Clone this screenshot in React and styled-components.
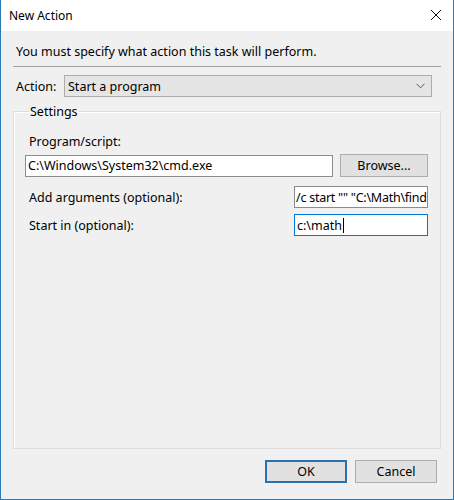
import styled, { createGlobalStyle } from "styled-components";

const Global = createGlobalStyle`
  html, body { margin: 0; padding: 0; background: #ffffff; }
  body { font-family: "Noto Sans", "Open Sans", sans-serif; font-size: 12.5px; color: #000; }
  * { box-sizing: border-box; }
`;

const Window = styled.div`
  width: 454px;
  height: 500px;
  display: flex;
  flex-direction: column;
  border: 1px solid #2b79b5;
  border-top: none;
  background: #f0f0f0;
`;

const TitleBar = styled.div`
  height: 31px;
  background: #ffffff;
  display: flex;
  align-items: center;
  justify-content: space-between;
  padding: 0 11px 1px 8px;
  font-size: 12px;
`;

const CloseBtn = styled.span`
  display: flex;
  width: 12px;
  height: 12px;
`;

const Body = styled.div`
  flex: 1;
  display: flex;
  flex-direction: column;
  padding: 0 12px;
`;

const Intro = styled.div`
  padding: 13px 0 0 3px;
  line-height: 15px;
  height: 36px;
  border-bottom: 1px solid #a0a0a0;
`;

const Row = styled.div`
  display: flex;
  align-items: center;
  gap: ${(p) => p.$gap || 0}px;
  margin-top: ${(p) => p.$top || 0}px;
  margin-right: ${(p) => p.$right || 0}px;
`;

const Label = styled.div`
  width: ${(p) => (p.$width ? `${p.$width}px` : "auto")};
  flex: ${(p) => (p.$grow ? 1 : "none")};
  padding-left: ${(p) => p.$pad || 3}px;
  line-height: 15px;
  white-space: nowrap;
`;

const Combo = styled.div`
  flex: 1;
  height: 22px;
  display: flex;
  align-items: center;
  justify-content: space-between;
  padding: 0 6px 0 3px;
  background: #e5e5e5;
  border: 1px solid #acacac;
`;

const Group = styled.fieldset`
  flex: 1;
  margin: 7px 0 0;
  min-width: 0;
  padding: 0 12px 0 11px;
  border: 1px solid #dcdcdc;
  box-shadow: inset 1px 1px 0 #ffffff;

  legend {
    margin-left: 4px;
    padding: 0 1px;
    line-height: 15px;
  }
`;

const TextBox = styled.div`
  width: ${(p) => (p.$width ? `${p.$width}px` : "auto")};
  flex: ${(p) => (p.$width ? "none" : 1)};
  height: 22px;
  display: flex;
  align-items: center;
  padding: 0 ${(p) => (p.$tight ? 1 : 2)}px;
  letter-spacing: ${(p) => (p.$tight ? "-0.25px" : "normal")};
  background: #ffffff;
  border: 1px solid ${(p) => (p.$focused ? "#0078d7" : "#8c8c8c")};
  white-space: nowrap;
  overflow: hidden;
`;

const Caret = styled.span`
  display: inline-block;
  width: 1px;
  height: 15px;
  background: #000;
  margin-left: 1px;
`;

const Button = styled.div`
  width: ${(p) => p.$width || 82}px;
  height: 23px;
  display: flex;
  align-items: center;
  justify-content: center;
  background: #e1e1e1;
  border: ${(p) => (p.$default ? "2px solid #2a72ad" : "1px solid #adadad")};
`;

const Footer = styled.div`
  display: flex;
  justify-content: flex-end;
  gap: 8px;
  padding: 11px 4px 16px 0;
`;

function Chevron() {
  return (
    <svg width="9" height="6" viewBox="0 0 9 6">
      <path d="M0.5 0.8 L4.5 4.8 L8.5 0.8" fill="none" stroke="#555" strokeWidth="1" />
    </svg>
  );
}

export default function App() {
  return (
    <>
      <Global />
      <Window>
        <TitleBar>
          <span>New Action</span>
          <CloseBtn>
            <svg width="12" height="12" viewBox="0 0 12 12">
              <path d="M1 1 L11 11 M11 1 L1 11" stroke="#111" strokeWidth="1" />
            </svg>
          </CloseBtn>
        </TitleBar>
        <Body>
          <Intro>You must specify what action this task will perform.</Intro>
          <Row $top={8} $right={9}>
            <Label $width={51}>Action:</Label>
            <Combo>
              <span>Start a program</span>
              <Chevron />
            </Combo>
          </Row>
          <Group>
            <legend>Settings</legend>
            <Row $top={15}>
              <Label $pad={4}>Program/script:</Label>
            </Row>
            <Row $top={5} $gap={7}>
              <TextBox>C:\Windows\System32\cmd.exe</TextBox>
              <Button $width={88}>Browse...</Button>
            </Row>
            <Row $top={9}>
              <Label $pad={4} $grow>Add arguments (optional):</Label>
              <TextBox $width={134} $tight>/c start "" "C:\Math\find</TextBox>
            </Row>
            <Row $top={6}>
              <Label $pad={4} $grow>Start in (optional):</Label>
              <TextBox $width={134} $focused>
                c:\math<Caret />
              </TextBox>
            </Row>
          </Group>
          <Footer>
            <Button $default>OK</Button>
            <Button>Cancel</Button>
          </Footer>
        </Body>
      </Window>
    </>
  );
}
